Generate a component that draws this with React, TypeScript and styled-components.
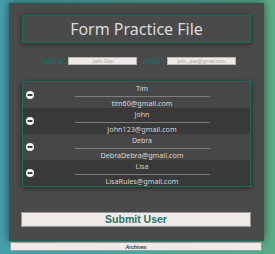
import React from "react";
import styled, { createGlobalStyle } from "styled-components";

const Global = createGlobalStyle`
  html, body { margin: 0; padding: 0; }
  body {
    width: 275px;
    height: 254px;
    overflow: hidden;
    background: linear-gradient(90deg, #459ea9 0%, #4fa69b 50%, #5aac88 100%);
    font-family: "Noto Sans", "Liberation Sans", sans-serif;
  }
`;

const Page = styled.div`
  display: flex;
  flex-direction: column;
  padding: 3px 0 0 9px;
  width: 255px;
`;

const Panel = styled.div`
  box-sizing: border-box;
  width: 255px;
  height: 238px;
  background: #4a4a4a;
  border: 1px solid #1f5e55;
  box-shadow: 0 0 8px rgba(0, 0, 0, 0.55);
  padding: 11px 12px 0 12px;
  display: flex;
  flex-direction: column;
`;

const TitleBox = styled.div`
  box-sizing: border-box;
  height: 28px;
  border: 1px solid #1d6a5f;
  box-shadow: 0 1px 5px rgba(0, 0, 0, 0.5);
  display: flex;
  align-items: center;
  justify-content: center;
`;

const Title = styled.h1`
  margin: 0;
  font-family: "Noto Sans", sans-serif;
  font-weight: 400;
  font-size: 16px;
  color: #dcdcdc;
`;

const FormRow = styled.div`
  margin-top: 14px;
  height: 8px;
  display: flex;
  align-items: center;
  justify-content: center;
  padding-left: 4px;
`;

const Label = styled.span<{ $first?: boolean }>`
  font-family: "Liberation Sans", sans-serif;
  font-size: 8.5px;
  line-height: 8px;
  color: #1e7063;
  margin-right: 2px;
  margin-left: ${(p) => (p.$first ? "0" : "5px")};
`;

const Input = styled.div`
  box-sizing: border-box;
  width: 69px;
  height: 8px;
  background: #efeae8;
  border: 1px solid #b8b2b0;
  display: flex;
  align-items: center;
  justify-content: center;
  font-family: "Liberation Sans", sans-serif;
  font-size: 5px;
  color: #a8a4a2;
  line-height: 1;
`;

const List = styled.div`
  margin-top: 16px;
  border: 1px solid #1d6a5f;
  box-shadow: 0 1px 5px rgba(0, 0, 0, 0.5);
  display: flex;
  flex-direction: column;
`;

const Row = styled.div<{ $dark: boolean }>`
  height: 26px;
  background: ${(p) => (p.$dark ? "#393939" : "#474747")};
  display: flex;
  align-items: center;
  padding-left: 3px;
`;

const Content = styled.div`
  flex: 1;
  display: flex;
  flex-direction: column;
  align-items: center;
  height: 26px;
  padding-top: 2px;
  box-sizing: border-box;
`;

const Name = styled.div`
  font-family: "Noto Sans", sans-serif;
  font-size: 7px;
  line-height: 10px;
  color: #d6d6d6;
`;

const Rule = styled.div`
  width: 135px;
  height: 1px;
  margin-top: 1.5px;
  background: #7d7d7d;
`;

const Email = styled.div`
  margin-top: 1.5px;
  font-family: "Noto Sans", sans-serif;
  font-size: 7.2px;
  line-height: 10px;
  color: #d6d6d6;
`;

const Submit = styled.button`
  margin-top: 25px;
  box-sizing: border-box;
  height: 15px;
  width: 230px;
  margin-left: -1px;
  background: #efeae8;
  border: 1px solid #9a9694;
  font-family: "Liberation Sans", sans-serif;
  font-weight: 700;
  font-size: 10.5px;
  color: #1f7566;
  padding: 0;
  line-height: 1;
`;

const Archives = styled.div`
  box-sizing: border-box;
  margin-top: 1px;
  margin-left: 1px;
  width: 252px;
  height: 9px;
  background: #efeae8;
  border: 1px solid #a09c9a;
  display: flex;
  align-items: center;
  justify-content: center;
  font-family: "Liberation Sans", sans-serif;
  font-style: italic;
  font-weight: 700;
  font-size: 5px;
  color: #3a3a3a;
`;

const MinusIcon = () => (
  <svg width="8" height="8" viewBox="0 0 8 8">
    <circle cx="4" cy="4" r="4" fill="#f4f4f4" />
    <rect x="1.6" y="3.1" width="4.8" height="1.8" fill="#2e2e2e" />
  </svg>
);

const users = [
  { name: "Tim", email: "tim60@gmail.com" },
  { name: "John", email: "John123@gmail.com" },
  { name: "Debra", email: "DebraDebra@gmail.com" },
  { name: "Lisa", email: "LisaRules@gmail.com" },
];

export default function App() {
  return (
    <>
      <Global />
      <Page>
        <Panel>
          <TitleBox>
            <Title>Form Practice File</Title>
          </TitleBox>
          <FormRow>
            <Label $first>Name:</Label>
            <Input>John Doe</Input>
            <Label>email:</Label>
            <Input>john_doe@gmail.com</Input>
          </FormRow>
          <List>
            {users.map((u, i) => (
              <Row key={u.name} $dark={i % 2 === 1}>
                <MinusIcon />
                <Content>
                  <Name>{u.name}</Name>
                  <Rule />
                  <Email>{u.email}</Email>
                </Content>
              </Row>
            ))}
          </List>
          <Submit>Submit User</Submit>
        </Panel>
        <Archives>Archives</Archives>
      </Page>
    </>
  );
}
